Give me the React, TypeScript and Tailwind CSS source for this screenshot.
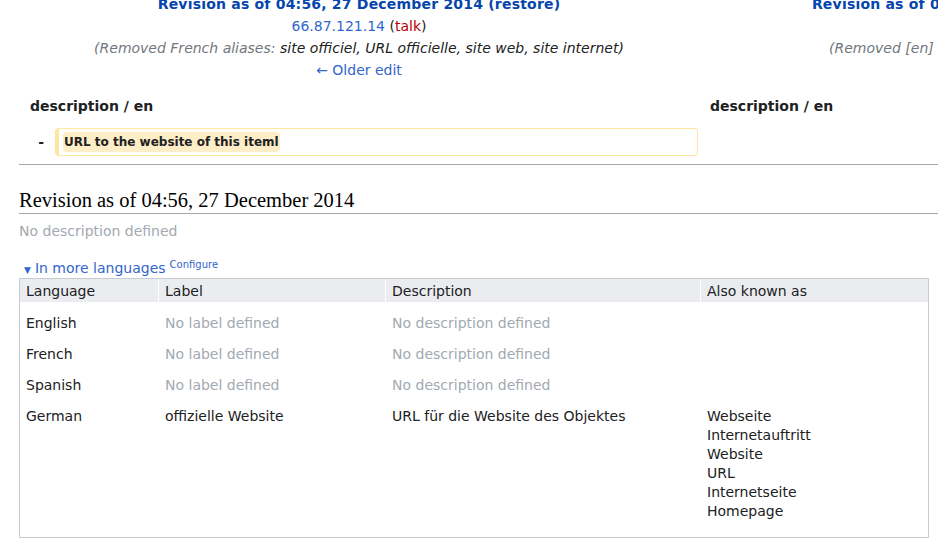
import React from 'react';

const sans = "font-['DejaVu_Sans',sans-serif]";

const rows = [
  { lang: 'English', label: null, desc: null, aliases: [] as string[] },
  { lang: 'French', label: null, desc: null, aliases: [] as string[] },
  { lang: 'Spanish', label: null, desc: null, aliases: [] as string[] },
  {
    lang: 'German',
    label: 'offizielle Website',
    desc: 'URL für die Website des Objektes',
    aliases: ['Webseite', 'Internetauftritt', 'Website', 'URL', 'Internetseite', 'Homepage'],
  },
];

function DiffHeader() {
  return (
    <div className="overflow-hidden">
      <div className="flex w-[1400px] pl-[19px] -mt-[7px] leading-[22px] text-[14px]">
        {/* old revision */}
        <div className="w-[680px] shrink-0">
          <div className="text-center font-bold tracking-[0.2px] text-[#0645ad]">
            Revision as of 04:56, 27 December 2014 (restore)
          </div>
          <div className="text-center">
            <span className="text-[#3366cc]">66.87.121.14</span>{' '}
            <span className="text-[#202122]">(</span>
            <span className="text-[#ba0000]">talk</span>
            <span className="text-[#202122]">)</span>
          </div>
          <div className="text-center italic">
            <span className="text-[#72777d]">(Removed French aliases: </span>
            <span className="text-[#202122]">site officiel, URL officielle, site web, site internet)</span>
          </div>
          <div className="text-center text-[#3366cc]">← Older edit</div>

          <div className="mt-[14px] pl-[11px] font-bold text-[#202122]">description / en</div>

          <div className="mt-[11px] flex">
            <div className="w-[36px] shrink-0 pr-[11px] text-right font-bold leading-[28px] text-[#202122]">
              -
            </div>
            <div className="w-[643px] rounded-[4px] border border-l-[4px] border-[#fde69f] py-[3px] pl-[4px] text-[12px] leading-[20px]">
              <span className="inline-block rounded-[4px] bg-[#feeec8] px-[1px] font-bold text-[#202122]">
                URL to the website of this iteml
              </span>
            </div>
          </div>
        </div>

        {/* new revision */}
        <div className="w-[700px] shrink-0">
          <div className="pr-[40px] text-center font-bold tracking-[0.2px] text-[#0645ad]">
            Revision as of 05:02, 27 December 2014 (edit) (undo)
          </div>
          <div className="text-center">&nbsp;</div>
          <div className="pr-[18px] text-center italic">
            <span className="text-[#72777d]">(Removed [en] description: </span>
            <span className="text-[#202122]">URL to the website of this iteml)</span>
          </div>
          <div className="text-center">&nbsp;</div>
          <div className="mt-[14px] pl-[11px] font-bold text-[#202122]">description / en</div>
        </div>
      </div>
      <div className="ml-[19px] mt-[8px] h-px bg-[#a2a9b1]" />
    </div>
  );
}

export default function App() {
  return (
    <div className={`${sans} h-[547px] w-[938px] overflow-hidden bg-white text-[#202122]`}>
      <DiffHeader />

      <div className="pl-[19px]">
        <h2 className="mt-[22px] border-b border-[#a2a9b1] font-['Liberation_Serif',serif] text-[20.5px] leading-[26px] text-[#000]">
          Revision as of 04:56, 27 December 2014
        </h2>
        <div className="mt-[6px] text-[14px] leading-[22px] text-[#a2a9b1]">No description defined</div>

        <div className="mt-[16px] flex h-[20px] items-baseline pl-[5px] text-[14px] leading-[20px] text-[#3366cc]">
          <span className="mr-[4px] text-[9px]">▼</span>
          <span>In more languages</span>
          <sup className="ml-[4px] text-[10px]">Configure</sup>
        </div>

        <div className="w-[910px] border border-[#c8ccd1] pb-[10px] text-[14px]">
          <div className="grid grid-cols-[138px_227px_315px_1fr] bg-[#eaecf0] pt-px leading-[22px]">
            <div className="pl-[6px]">Language</div>
            <div className="border-l border-white pl-[6px]">Label</div>
            <div className="border-l border-white pl-[6px]">Description</div>
            <div className="border-l border-white pl-[6px]">Also known as</div>
          </div>
          <div className="pt-[6px]">
            {rows.map((r) => (
              <div
                key={r.lang}
                className="grid grid-cols-[138px_227px_315px_1fr] py-[6px] leading-[19px]"
              >
                <div className="pl-[6px]">{r.lang}</div>
                <div className={`pl-[7px] ${r.label ? '' : 'text-[#a2a9b1]'}`}>
                  {r.label ?? 'No label defined'}
                </div>
                <div className={`pl-[7px] ${r.desc ? '' : 'text-[#a2a9b1]'}`}>
                  {r.desc ?? 'No description defined'}
                </div>
                <div className="pl-[7px]">
                  {r.aliases.map((a) => (
                    <div key={a}>{a}</div>
                  ))}
                </div>
              </div>
            ))}
          </div>
        </div>
      </div>
    </div>
  );
}
